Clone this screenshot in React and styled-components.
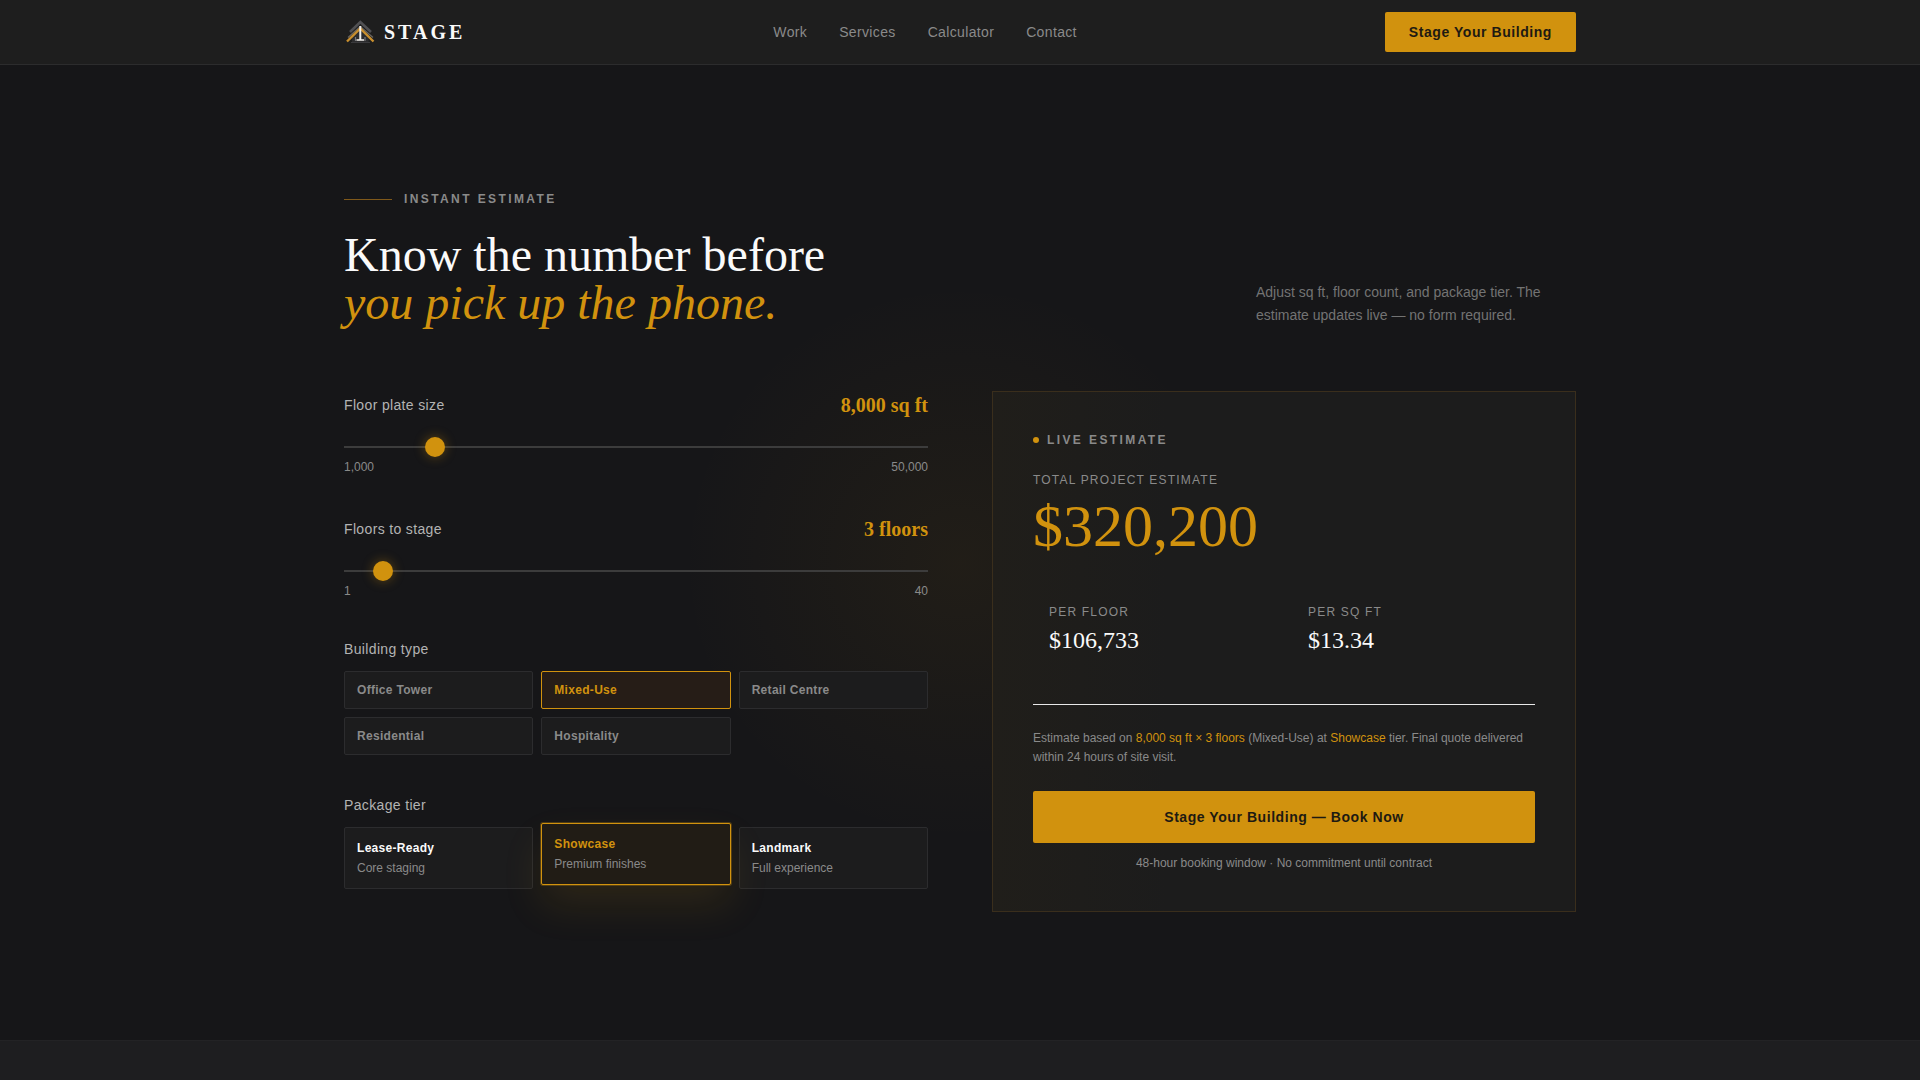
import React, { useState } from "react";
import styled, { createGlobalStyle, css } from "styled-components";

const GlobalStyle = createGlobalStyle`
  :root {
    --color-gold: #d1920e;
    --color-ink: #161618;
    --color-panel: #1e1e1e;
    --color-muted: #8a8a8a;
    --font-sans: "Liberation Sans", Arial, sans-serif;
    --font-serif: "Liberation Serif", "Times New Roman", serif;
  }

  * {
    box-sizing: border-box;
  }

  body {
    margin: 0;
    background: var(--color-ink);
    color: #fafafa;
    font-family: var(--font-sans);
    font-size: 14px;
    line-height: 20px;
  }

  button,
  input {
    font-family: inherit;
  }
`;

const Page = styled.div`
  display: flex;
  flex-direction: column;
  min-height: 100vh;
`;

const Container = styled.div`
  width: 100%;
  max-width: 1280px;
  margin: 0 auto;
  padding: 0 24px;
`;

const Header = styled.header`
  background: var(--color-panel);
  border-bottom: 1px solid #2c2c2d;
`;

const HeaderInner = styled(Container)`
  display: flex;
  justify-content: space-between;
  align-items: center;
  height: 64px;
`;

const Brand = styled.a`
  display: flex;
  align-items: center;
  gap: 8px;
  color: #fafafa;
  font-family: var(--font-serif);
  font-size: 20px;
  font-weight: 700;
  letter-spacing: 0.15em;
  line-height: 28px;
  text-decoration: none;
`;

const Nav = styled.nav`
  display: flex;
  gap: 32px;
`;

const NavLink = styled.a`
  color: var(--color-muted);
  letter-spacing: 0.025em;
  text-decoration: none;
`;

const PrimaryButton = styled.button`
  width: ${(props) => (props.$wide ? "100%" : "auto")};
  padding: ${(props) => (props.$wide ? "16px 24px" : "10px 24px")};
  border: none;
  border-radius: 2px;
  background: var(--color-gold);
  color: #1e1a12;
  font-size: 14px;
  font-weight: 700;
  letter-spacing: 0.04em;
  line-height: 20px;
  cursor: pointer;
`;

const EstimateSection = styled.section`
  padding: 124px 0 128px;
  background: radial-gradient(
    ellipse 280px 280px at 50% 51%,
    rgba(209, 146, 14, 0.06),
    transparent
  );
`;

const NextSection = styled.div`
  flex: 1;
  background: #1e1e20;
  border-top: 1px solid #232325;
`;

const Eyebrow = styled.p`
  display: flex;
  align-items: center;
  gap: 12px;
  margin: 0 0 22px;
  color: var(--color-muted);
  font-size: 12px;
  font-weight: 700;
  letter-spacing: 0.2em;
  line-height: 20px;
  text-transform: uppercase;

  &::before {
    content: "";
    width: 48px;
    height: 1px;
    background: #80591a;
  }
`;

const SectionHead = styled.div`
  display: flex;
  justify-content: space-between;
  align-items: flex-end;
  gap: 32px;
  margin-bottom: 64px;
`;

const Title = styled.h2`
  margin: 0;
  font-family: var(--font-serif);
  font-size: 48px;
  font-weight: 400;
  line-height: 48px;

  em {
    display: block;
    color: var(--color-gold);
  }
`;

const Lead = styled.p`
  width: 320px;
  margin: 0;
  color: #737373;
  line-height: 23px;
`;

const Columns = styled.div`
  display: grid;
  grid-template-columns: 1fr 1fr;
  gap: 64px;

  @media (max-width: 900px) {
    grid-template-columns: 1fr;
  }
`;

const Controls = styled.div`
  display: flex;
  flex-direction: column;
  gap: 38px;
`;

const FieldHead = styled.div`
  display: flex;
  justify-content: space-between;
  align-items: center;
  margin-bottom: 18px;
`;

const labelStyle = css`
  color: #b3b3b3;
  font-size: 14px;
  letter-spacing: 0.025em;
  line-height: 20px;
`;

const FieldLabel = styled.label`
  ${labelStyle}
`;

const FieldValue = styled.output`
  color: var(--color-gold);
  font-family: var(--font-serif);
  font-size: 20px;
  font-weight: 700;
  line-height: 28px;
`;

const RangeInput = styled.input`
  appearance: none;
  display: block;
  width: 100%;
  height: 20px;
  margin: 0;
  background: linear-gradient(#3c3c3c, #3c3c3c) center / 100% 2px no-repeat;
  cursor: pointer;

  &::-webkit-slider-thumb {
    appearance: none;
    width: 20px;
    height: 20px;
    border-radius: 50%;
    background: var(--color-gold);
    box-shadow: 0 0 12px rgba(209, 146, 14, 0.4);
  }
`;

const RangeLimits = styled.div`
  display: flex;
  justify-content: space-between;
  color: var(--color-muted);
  font-size: 12px;
  line-height: 20px;
`;

const OptionGroup = styled.fieldset`
  min-width: 0;
  margin: 0;
  padding: 0;
  border: none;

  & + & {
    margin-top: 2px;
  }
`;

const OptionLegend = styled.legend`
  ${labelStyle}
  margin-bottom: 12px;
  padding: 0;
`;

const OptionGrid = styled.div`
  display: grid;
  grid-template-columns: repeat(3, 1fr);
  gap: 8px;
`;

const optionStyle = css`
  padding: 9px 12px;
  border: 1px solid ${(props) => (props.$active ? "var(--color-gold)" : "#2c2c2e")};
  border-radius: 2px;
  background: #1c1c1d;
  font-size: 12px;
  line-height: 18px;
  text-align: left;
  cursor: pointer;
`;

const TypeButton = styled.button`
  ${optionStyle}
  background: ${(props) => (props.$active ? "#261d17" : "#1c1c1d")};
  color: ${(props) => (props.$active ? "var(--color-gold)" : "var(--color-muted)")};
  font-weight: 700;
  letter-spacing: 0.025em;
`;

const TierButton = styled.button`
  ${optionStyle}
  padding: 11px 12px;
  color: var(--color-muted);

  strong {
    display: block;
    margin-bottom: 2px;
    color: ${(props) => (props.$active ? "var(--color-gold)" : "#fafafa")};
    letter-spacing: 0.025em;
  }

  ${(props) =>
    props.$active &&
    css`
      background: #211c15;
      transform: translateY(-4px);
      box-shadow: 0 20px 40px rgba(209, 146, 14, 0.12),
        0 0 0 1px rgba(209, 146, 14, 0.3);
    `}
`;

const Card = styled.aside`
  display: flex;
  flex-direction: column;
  padding: 40px;
  border: 1px solid #3a2e1c;
  background: linear-gradient(90deg, #201e1a, #1c1c1c 30%);
`;

const LiveLabel = styled.p`
  display: flex;
  align-items: center;
  gap: 8px;
  margin: 0 0 22px;
  color: var(--color-muted);
  font-size: 12px;
  font-weight: 700;
  letter-spacing: 0.2em;
  line-height: 16px;
  text-transform: uppercase;

  &::before {
    content: "";
    width: 6px;
    height: 6px;
    border-radius: 50%;
    background: var(--color-gold);
  }
`;

const Caption = styled.div`
  color: var(--color-muted);
  font-size: 12px;
  letter-spacing: 0.1em;
  line-height: 20px;
  text-transform: uppercase;
`;

const Total = styled.div`
  margin: 6px 0 46px;
  color: var(--color-gold);
  font-family: var(--font-serif);
  font-size: 60px;
  line-height: 60px;
`;

const Breakdown = styled.div`
  display: grid;
  grid-template-columns: 1fr 1fr;
  gap: 16px;
  padding-bottom: 48px;
  border-bottom: 1px solid #e8e8e8;
`;

const BreakdownItem = styled.div`
  padding: 0 16px;
`;

const Amount = styled.div`
  margin-top: 2px;
  font-family: var(--font-serif);
  font-size: 24px;
  line-height: 32px;
`;

const Summary = styled.p`
  margin: 24px 0;
  color: var(--color-muted);
  font-size: 12px;
  line-height: 19px;

  span {
    color: var(--color-gold);
  }
`;

const FinePrint = styled.p`
  margin: 12px 0 0;
  color: var(--color-muted);
  font-size: 12px;
  line-height: 16px;
  text-align: center;
`;

const navItems = ["Work", "Services", "Calculator", "Contact"];

const buildingTypes = [
  "Office Tower",
  "Mixed-Use",
  "Retail Centre",
  "Residential",
  "Hospitality",
];

// rate is the price per square foot, before the fixed setup cost
const tiers = [
  { name: "Lease-Ready", note: "Core staging", rate: 8.5 },
  { name: "Showcase", note: "Premium finishes", rate: 13 },
  { name: "Landmark", note: "Full experience", rate: 21 },
];

const SETUP_COST = 8200;

const dollars = (value) => `$${Math.round(value).toLocaleString("en-US")}`;

const Logo = () => (
  <svg width="32" height="32" viewBox="0 0 32 32" fill="none" aria-hidden="true">
    <path d="M8 26V17l8.300-7 8.300 7v9z" fill="#2c2c2e" />
    <path d="M6 16 16.300 6 27 16" stroke="#505053" strokeWidth="2.600" />
    <path d="M4 21.500 16.300 10.500 29 21.500" stroke="#6b6660" strokeWidth="1.200" />
    <path d="M3 25.500 16.300 12.500 29.500 25.500" stroke="#c98f2e" strokeWidth="2.400" />
    <path d="M11.500 21v4M21 21v4" stroke="#77777a" strokeWidth="1.200" />
    <path d="M16.300 10v14" stroke="#f4f2ee" strokeWidth="2" />
    <path d="M12.500 24h7.500" stroke="#f4f2ee" strokeWidth="1.500" />
    <path d="M7 26.500h19" stroke="#3a3a3d" strokeWidth="1" />
  </svg>
);

const RangeField = ({ id, label, value, display, min, max, step, onChange }) => (
  <div>
    <FieldHead>
      <FieldLabel htmlFor={id}>{label}</FieldLabel>
      <FieldValue htmlFor={id}>{display}</FieldValue>
    </FieldHead>
    <RangeInput
      id={id}
      type="range"
      min={min}
      max={max}
      step={step}
      value={value}
      onChange={(e) => onChange(Number(e.target.value))}
    />
    <RangeLimits>
      <span>{min.toLocaleString("en-US")}</span>
      <span>{max.toLocaleString("en-US")}</span>
    </RangeLimits>
  </div>
);

const App = () => {
  const [area, setArea] = useState(8000);
  const [floors, setFloors] = useState(3);
  const [type, setType] = useState("Mixed-Use");
  const [tier, setTier] = useState(tiers[1]);

  const total = area * floors * tier.rate + SETUP_COST;
  const areaText = `${area.toLocaleString("en-US")} sq ft`;
  const floorsText = `${floors} ${floors === 1 ? "floor" : "floors"}`;

  return (
    <Page>
      <GlobalStyle />
      <Header>
        <HeaderInner>
          <Brand href="#top">
            <Logo />
            STAGE
          </Brand>
          <Nav>
            {navItems.map((item) => (
              <NavLink key={item} href={`#${item.toLowerCase()}`}>
                {item}
              </NavLink>
            ))}
          </Nav>
          <PrimaryButton type="button">Stage Your Building</PrimaryButton>
        </HeaderInner>
      </Header>

      <EstimateSection id="calculator">
        <Container>
          <Eyebrow>Instant Estimate</Eyebrow>
          <SectionHead>
            <Title>
              Know the number before
              <em>you pick up the phone.</em>
            </Title>
            <Lead>
              Adjust sq ft, floor count, and package tier. The estimate updates
              live — no form required.
            </Lead>
          </SectionHead>

          <Columns>
            <Controls>
              <RangeField
                id="area"
                label="Floor plate size"
                value={area}
                display={areaText}
                min={1000}
                max={50000}
                step={500}
                onChange={setArea}
              />
              <RangeField
                id="floors"
                label="Floors to stage"
                value={floors}
                display={floorsText}
                min={1}
                max={40}
                step={1}
                onChange={setFloors}
              />

              <OptionGroup>
                <OptionLegend>Building type</OptionLegend>
                <OptionGrid>
                  {buildingTypes.map((name) => (
                    <TypeButton
                      key={name}
                      type="button"
                      $active={name === type}
                      aria-pressed={name === type}
                      onClick={() => setType(name)}
                    >
                      {name}
                    </TypeButton>
                  ))}
                </OptionGrid>
              </OptionGroup>

              <OptionGroup>
                <OptionLegend>Package tier</OptionLegend>
                <OptionGrid>
                  {tiers.map((item) => (
                    <TierButton
                      key={item.name}
                      type="button"
                      $active={item.name === tier.name}
                      aria-pressed={item.name === tier.name}
                      onClick={() => setTier(item)}
                    >
                      <strong>{item.name}</strong>
                      {item.note}
                    </TierButton>
                  ))}
                </OptionGrid>
              </OptionGroup>
            </Controls>

            <Card>
              <LiveLabel>Live Estimate</LiveLabel>
              <Caption>Total Project Estimate</Caption>
              <Total>{dollars(total)}</Total>
              <Breakdown>
                <BreakdownItem>
                  <Caption>Per Floor</Caption>
                  <Amount>{dollars(total / floors)}</Amount>
                </BreakdownItem>
                <BreakdownItem>
                  <Caption>Per Sq Ft</Caption>
                  <Amount>${(total / (area * floors)).toFixed(2)}</Amount>
                </BreakdownItem>
              </Breakdown>
              <Summary>
                Estimate based on{" "}
                <span>
                  {areaText} × {floorsText}
                </span>{" "}
                ({type}) at <span>{tier.name}</span> tier. Final quote delivered
                within 24 hours of site visit.
              </Summary>
              <PrimaryButton type="button" $wide>
                Stage Your Building — Book Now
              </PrimaryButton>
              <FinePrint>
                48-hour booking window · No commitment until contract
              </FinePrint>
            </Card>
          </Columns>
        </Container>
      </EstimateSection>
      <NextSection />
    </Page>
  );
};

export default App;
